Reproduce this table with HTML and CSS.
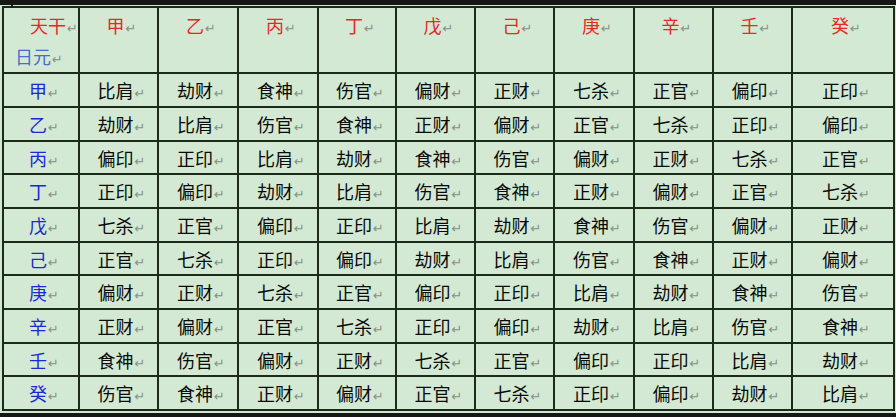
FILE: index.html
```html
<!DOCTYPE html>
<html lang="zh">
<head>
<meta charset="utf-8">
<title>十神表</title>
<link rel="stylesheet" href="styles.css">
</head>
<body>
<div class="topbar"></div>
<div class="frame">
<table class="tbl">
<colgroup>
<col class="c0"><col class="c1"><col class="c2"><col class="c3"><col class="c4"><col class="c5"><col class="c6"><col class="c7"><col class="c8"><col class="c9"><col class="c10">
</colgroup>
<tr class="head">
<th class="corner"><div class="tg">天干<span class="pm">↵</span></div><div class="ry">日元<span class="pm">↵</span></div></th>
<th>甲<span class="pm">↵</span></th><th>乙<span class="pm">↵</span></th><th>丙<span class="pm">↵</span></th><th>丁<span class="pm">↵</span></th><th>戊<span class="pm">↵</span></th><th>己<span class="pm">↵</span></th><th>庚<span class="pm">↵</span></th><th>辛<span class="pm">↵</span></th><th>壬<span class="pm">↵</span></th><th>癸<span class="pm">↵</span></th>
</tr>
<tr class="r34"><td class="rh">甲<span class="pm">↵</span></td><td>比肩<span class="pm">↵</span></td><td>劫财<span class="pm">↵</span></td><td>食神<span class="pm">↵</span></td><td>伤官<span class="pm">↵</span></td><td>偏财<span class="pm">↵</span></td><td>正财<span class="pm">↵</span></td><td>七杀<span class="pm">↵</span></td><td>正官<span class="pm">↵</span></td><td>偏印<span class="pm">↵</span></td><td>正印<span class="pm">↵</span></td></tr>
<tr class="r34"><td class="rh">乙<span class="pm">↵</span></td><td>劫财<span class="pm">↵</span></td><td>比肩<span class="pm">↵</span></td><td>伤官<span class="pm">↵</span></td><td>食神<span class="pm">↵</span></td><td>正财<span class="pm">↵</span></td><td>偏财<span class="pm">↵</span></td><td>正官<span class="pm">↵</span></td><td>七杀<span class="pm">↵</span></td><td>正印<span class="pm">↵</span></td><td>偏印<span class="pm">↵</span></td></tr>
<tr class="r33"><td class="rh">丙<span class="pm">↵</span></td><td>偏印<span class="pm">↵</span></td><td>正印<span class="pm">↵</span></td><td>比肩<span class="pm">↵</span></td><td>劫财<span class="pm">↵</span></td><td>食神<span class="pm">↵</span></td><td>伤官<span class="pm">↵</span></td><td>偏财<span class="pm">↵</span></td><td>正财<span class="pm">↵</span></td><td>七杀<span class="pm">↵</span></td><td>正官<span class="pm">↵</span></td></tr>
<tr class="r34"><td class="rh">丁<span class="pm">↵</span></td><td>正印<span class="pm">↵</span></td><td>偏印<span class="pm">↵</span></td><td>劫财<span class="pm">↵</span></td><td>比肩<span class="pm">↵</span></td><td>伤官<span class="pm">↵</span></td><td>食神<span class="pm">↵</span></td><td>正财<span class="pm">↵</span></td><td>偏财<span class="pm">↵</span></td><td>正官<span class="pm">↵</span></td><td>七杀<span class="pm">↵</span></td></tr>
<tr class="r34"><td class="rh">戊<span class="pm">↵</span></td><td>七杀<span class="pm">↵</span></td><td>正官<span class="pm">↵</span></td><td>偏印<span class="pm">↵</span></td><td>正印<span class="pm">↵</span></td><td>比肩<span class="pm">↵</span></td><td>劫财<span class="pm">↵</span></td><td>食神<span class="pm">↵</span></td><td>伤官<span class="pm">↵</span></td><td>偏财<span class="pm">↵</span></td><td>正财<span class="pm">↵</span></td></tr>
<tr class="r33"><td class="rh">己<span class="pm">↵</span></td><td>正官<span class="pm">↵</span></td><td>七杀<span class="pm">↵</span></td><td>正印<span class="pm">↵</span></td><td>偏印<span class="pm">↵</span></td><td>劫财<span class="pm">↵</span></td><td>比肩<span class="pm">↵</span></td><td>伤官<span class="pm">↵</span></td><td>食神<span class="pm">↵</span></td><td>正财<span class="pm">↵</span></td><td>偏财<span class="pm">↵</span></td></tr>
<tr class="r34"><td class="rh">庚<span class="pm">↵</span></td><td>偏财<span class="pm">↵</span></td><td>正财<span class="pm">↵</span></td><td>七杀<span class="pm">↵</span></td><td>正官<span class="pm">↵</span></td><td>偏印<span class="pm">↵</span></td><td>正印<span class="pm">↵</span></td><td>比肩<span class="pm">↵</span></td><td>劫财<span class="pm">↵</span></td><td>食神<span class="pm">↵</span></td><td>伤官<span class="pm">↵</span></td></tr>
<tr class="r34"><td class="rh">辛<span class="pm">↵</span></td><td>正财<span class="pm">↵</span></td><td>偏财<span class="pm">↵</span></td><td>正官<span class="pm">↵</span></td><td>七杀<span class="pm">↵</span></td><td>正印<span class="pm">↵</span></td><td>偏印<span class="pm">↵</span></td><td>劫财<span class="pm">↵</span></td><td>比肩<span class="pm">↵</span></td><td>伤官<span class="pm">↵</span></td><td>食神<span class="pm">↵</span></td></tr>
<tr class="r33"><td class="rh">壬<span class="pm">↵</span></td><td>食神<span class="pm">↵</span></td><td>伤官<span class="pm">↵</span></td><td>偏财<span class="pm">↵</span></td><td>正财<span class="pm">↵</span></td><td>七杀<span class="pm">↵</span></td><td>正官<span class="pm">↵</span></td><td>偏印<span class="pm">↵</span></td><td>正印<span class="pm">↵</span></td><td>比肩<span class="pm">↵</span></td><td>劫财<span class="pm">↵</span></td></tr>
<tr class="r34"><td class="rh">癸<span class="pm">↵</span></td><td>伤官<span class="pm">↵</span></td><td>食神<span class="pm">↵</span></td><td>正财<span class="pm">↵</span></td><td>偏财<span class="pm">↵</span></td><td>正官<span class="pm">↵</span></td><td>七杀<span class="pm">↵</span></td><td>正印<span class="pm">↵</span></td><td>偏印<span class="pm">↵</span></td><td>劫财<span class="pm">↵</span></td><td>比肩<span class="pm">↵</span></td></tr>
</table>
</div>
<div class="bottombar"></div>
</body>
</html>
```
FILE: styles.css
```css
html, body {
  margin: 0;
  padding: 0;
}
body {
  width: 896px;
  height: 417px;
  overflow: hidden;
  background: #d2e7d2;
  font-family: "Noto Sans CJK SC", "Noto Sans", sans-serif;
}
.topbar {
  position: relative;
  height: 5px;
  background: #151815;
}
.topbar::after {
  content: "";
  position: absolute;
  left: 11px;
  top: 4px;
  width: 2px;
  height: 3px;
  background: #151815;
}
.frame {
  padding: 1px 0 0 2px;
}
.tbl {
  border-collapse: collapse;
  table-layout: fixed;
  width: 891px;
  background: #d3e9d3;
}
.c0 { width: 76px; }
.c1 { width: 79px; }
.c2 { width: 80px; }
.c3 { width: 80px; }
.c4 { width: 78px; }
.c5 { width: 79px; }
.c6 { width: 79px; }
.c7 { width: 80px; }
.c8 { width: 79px; }
.c9 { width: 79px; }
.c10 { width: 102px; }
.tbl th, .tbl td {
  border: 2px solid #1b2a1b;
  padding: 0 0 0 6px;
  font-size: 18px;
  font-weight: normal;
  text-align: center;
  white-space: nowrap;
  color: #0a0a0a;
  overflow: hidden;
}
.head {
  height: 66px;
}
.head th {
  vertical-align: top;
  color: #e8262a;
  line-height: 30px;
  padding-top: 2px;
}
.head th.corner {
  padding: 2px 0 0 0;
  text-align: left;
}
.tg {
  text-align: right;
  color: #e8262a;
  line-height: 30px;
}
.ry {
  padding-left: 11px;
  color: #4a6ccc;
  line-height: 32px;
}
.r34 { height: 34px; }
.r33 { height: 33px; }
.tbl td {
  vertical-align: middle;
  line-height: 22px;
}
.tbl td.rh {
  color: #1c28d4;
}
.pm {
  font-family: "DejaVu Sans", sans-serif;
  font-size: 13px;
  font-weight: normal;
  line-height: 0;
  color: #859285;
  margin-left: 1px;
}
.bottombar {
  margin-top: 2px;
  height: 8px;
  background: #151815;
}
```
